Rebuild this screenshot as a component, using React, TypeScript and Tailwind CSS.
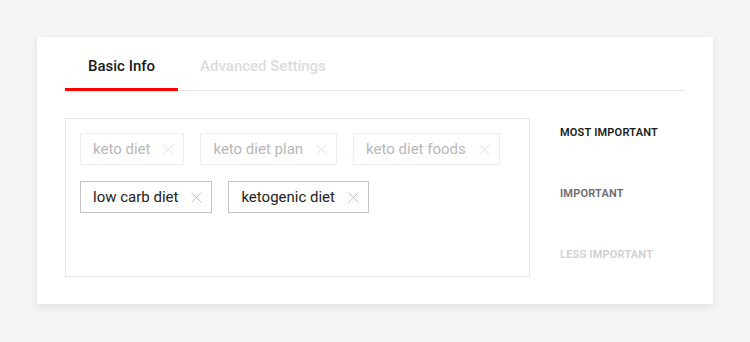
type Tag = { label: string; active: boolean };

const tags: Tag[] = [
  { label: "keto diet", active: false },
  { label: "keto diet plan", active: false },
  { label: "keto diet foods", active: false },
  { label: "low carb diet", active: true },
  { label: "ketogenic diet", active: true },
];

function CloseIcon({ className }: { className?: string }) {
  return (
    <svg viewBox="0 0 11 11" className={className} fill="none" stroke="currentColor" strokeWidth={1}>
      <path d="M0.5 0.5L10.5 10.5M10.5 0.5L0.5 10.5" />
    </svg>
  );
}

function TagChip({ tag }: { tag: Tag }) {
  return (
    <div
      className={`flex h-[32px] items-center border pl-[12px] pr-[9px] ${
        tag.active ? "border-[#c4c4c4] text-[#222]" : "border-[#ececec] text-[#b8b8b8]"
      }`}
    >
      <span className="text-[15px] leading-none">{tag.label}</span>
      <CloseIcon
        className={`ml-[13px] h-[11px] w-[11px] ${tag.active ? "text-[#c2c2c2]" : "text-[#e0e0e0]"}`}
      />
    </div>
  );
}

export default function App() {
  return (
    <div className="min-h-[342px] bg-[#f5f5f5] pt-[37px] font-['Roboto',sans-serif]">
      <div className="ml-[37px] w-[676px] bg-white px-[28px] pb-[27px] shadow-[0_3px_9px_rgba(0,0,0,0.09)]">
        <div className="flex border-b border-[#e6e6e6]">
          <button className="-mb-px border-b-[3px] border-[#ff0000] px-[23px] pt-[19px] pb-[12px] text-[15px] leading-[20px] font-medium text-[#1a1a1a]">
            Basic Info
          </button>
          <button className="-mb-px border-b-[3px] border-transparent px-[22px] pt-[19px] pb-[12px] text-[15px] leading-[20px] font-medium text-[#dcdcdc]">
            Advanced Settings
          </button>
        </div>

        <div className="mt-[27px] flex">
          <div className="h-[159px] w-[465px] border border-[#e6e6e6] px-[14px] pt-[14px]">
            <div className="flex flex-wrap gap-[16px]">
              {tags.slice(0, 3).map(t => (
                <TagChip key={t.label} tag={t} />
              ))}
            </div>
            <div className="mt-[16px] flex flex-wrap gap-[16px]">
              {tags.slice(3).map(t => (
                <TagChip key={t.label} tag={t} />
              ))}
            </div>
          </div>

          <div className="ml-[30px] flex flex-col gap-[46px] pt-[7px] text-[11px] leading-[15px] font-semibold tracking-[0.2px] uppercase">
            <p className="text-[#1a1a1a]">Most Important</p>
            <p className="text-[#6b6b6b]">Important</p>
            <p className="text-[#cfcfcf]">Less Important</p>
          </div>
        </div>
      </div>
    </div>
  );
}
